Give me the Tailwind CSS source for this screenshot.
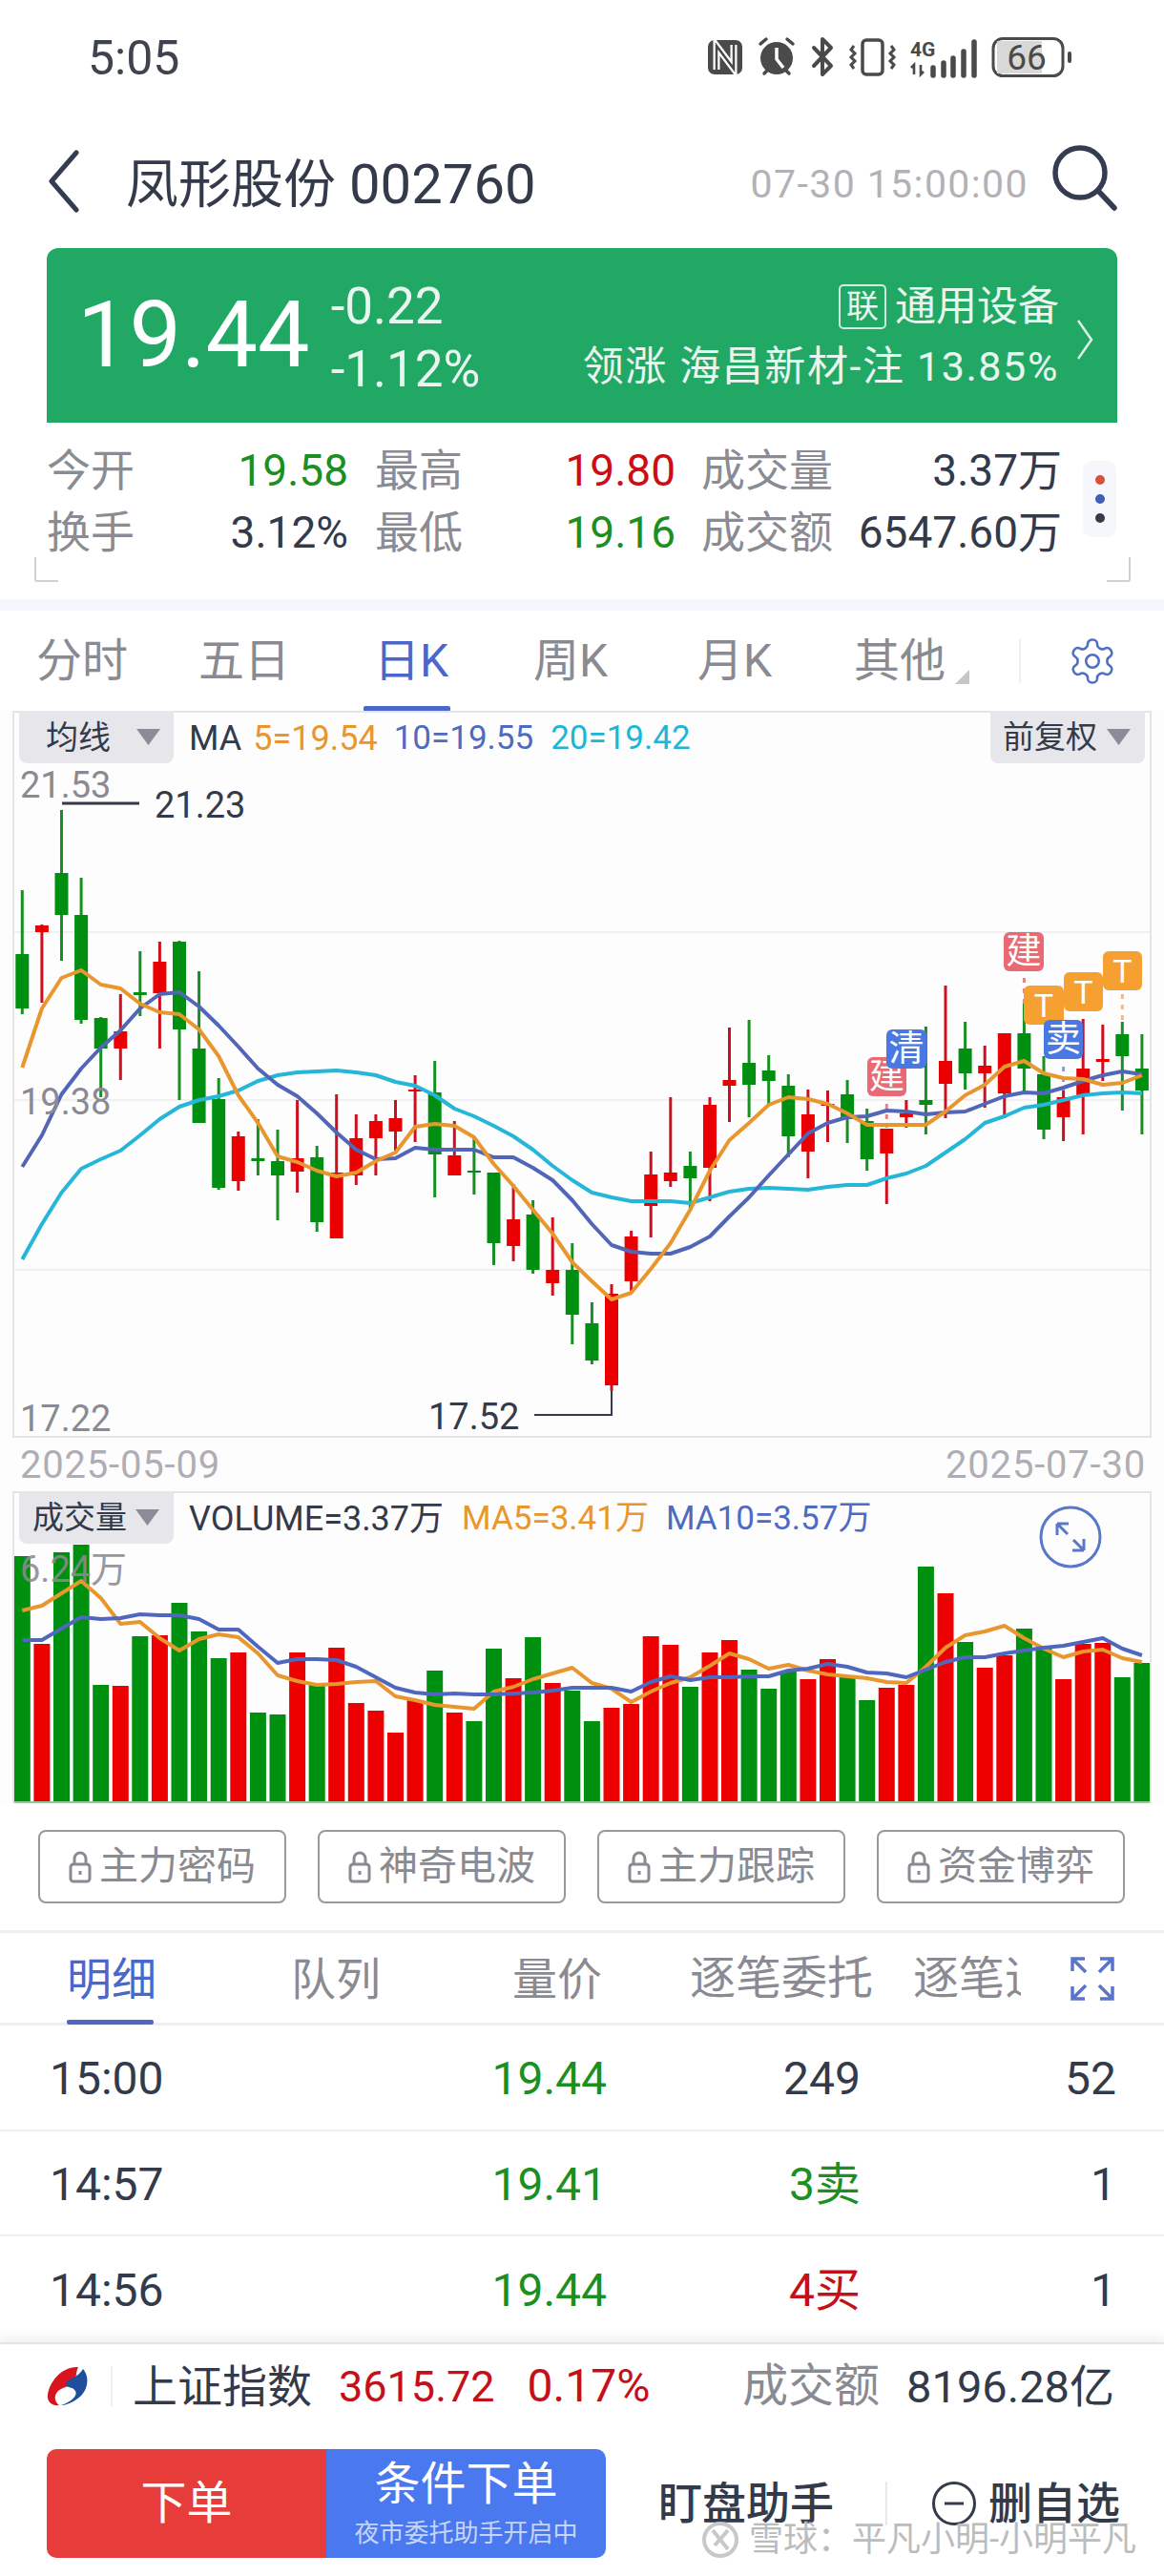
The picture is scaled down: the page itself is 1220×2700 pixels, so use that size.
<!DOCTYPE html>
<html lang="zh">
<head>
<meta charset="utf-8">
<script src="https://cdn.jsdelivr.net/npm/@tailwindcss/browser@4"></script>
</head>
<body class="bg-white">
<div class="w-[1220px] h-[2700px] overflow-hidden relative bg-white flex flex-col font-['Roboto','Noto_Sans_CJK_SC',sans-serif] text-[#333a4a]">

  <!-- status bar -->
  <div class="h-[120px] shrink-0 flex items-center justify-between pl-[92px]">
    <span class="text-[50px] leading-none text-[#3f4350] mt-[2px]">5:05</span>
    <svg class="w-[390px] h-[50px] mr-[92px]" viewBox="738 34 390 50">
      <rect x="742" y="41" width="36" height="36" rx="7" fill="#4a4a4a"/>
      <path d="M751 72V47L769 71V46" fill="none" stroke="#fff" stroke-width="7"/>
      <path d="M751 72V47L769 71V46" fill="none" stroke="#4a4a4a" stroke-width="2.500"/>
      <circle cx="814" cy="60" r="17" fill="#4a4a4a"/>
      <path d="M814 49V61L821 70" fill="none" stroke="#fff" stroke-width="3.500"/>
      <path d="M797 45L803 40M831 45L825 40M801 76L804 73M827 76L824 73" stroke="#4a4a4a" stroke-width="3.500" stroke-linecap="round"/>
      <path d="M853 49L871 68L862 77V40L871 49L853 68" fill="none" stroke="#4a4a4a" stroke-width="4" stroke-linecap="round" stroke-linejoin="round"/>
      <rect x="904" y="41" width="21" height="36" rx="4" fill="none" stroke="#4a4a4a" stroke-width="3.500"/>
      <path d="M895 47L892 51L896 55L892 59L896 63L892 67L895 71M934 47L937 51L933 55L937 59L933 63L937 67L934 71" fill="none" stroke="#4a4a4a" stroke-width="3"/>
      <text x="954" y="58" font-size="21" font-weight="700" fill="#4a4a4a" font-family="Roboto">4G</text>
      <path d="M958 77V67L955 70M965 67V77L968 74" fill="none" stroke="#4a4a4a" stroke-width="2.600"/>
      <path d="M978 78V70M989 78V65M999 78V60M1010 78V53M1021 78V43" stroke="#4a4a4a" stroke-width="5.500" stroke-linecap="round"/>
      <rect x="1041" y="39.500" width="73" height="39" rx="10" fill="none" stroke="#4a4a4a" stroke-width="3"/>
      <path d="M1045 42H1092V76H1045Z" fill="#d8d8d8"/>
      <rect x="1119" y="53" width="4" height="12" rx="2" fill="#4a4a4a"/>
      <text x="1076" y="72" text-anchor="middle" font-size="37" font-weight="400" fill="#4a4a4a" font-family="Roboto">66</text>
    </svg>
  </div>

  <!-- header -->
  <div class="h-[140px] shrink-0 flex items-center pl-[50px] pr-[48px]">
    <svg class="w-[34px] h-[66px]" viewBox="0 0 34 66"><path d="M30 3L4 33L30 63" fill="none" stroke="#333c50" stroke-width="5" stroke-linecap="round" stroke-linejoin="round"/></svg>
    <span class="ml-[48px] text-[55px] leading-none text-[#333a4a] mt-[6px]">凤形股份</span>
    <span class="ml-[14px] text-[58px] leading-none text-[#333a4a] mt-[6px]">002760</span>
    <span class="ml-auto mr-[24px] text-[41px] tracking-[1.4px] leading-none text-[#b2b2b6] mt-[6px]">07-30 15:00:00</span>
    <svg class="w-[70px] h-[70px] -mt-[8px]" viewBox="0 0 70 70"><circle cx="30" cy="30" r="26" fill="none" stroke="#333c50" stroke-width="5.500"/><path d="M50 50L66 67" stroke="#333c50" stroke-width="5.500" stroke-linecap="round"/></svg>
  </div>

  <!-- quote card -->
  <div class="mx-[49px] h-[183px] shrink-0 rounded-t-[12px] bg-[#22a865] text-white flex items-center pl-[32px] relative">
    <span class="text-[97px] leading-none font-normal">19.44</span>
    <div class="ml-[22px] flex flex-col gap-[14px] text-[53px] leading-[52px] text-white/90 mt-[4px]">
      <span>-0.22</span>
      <span>-1.12%</span>
    </div>
    <div class="ml-auto mr-[61px] flex flex-col items-end gap-[18px] text-white/90">
      <div class="flex items-center">
        <span class="w-[50px] h-[47px] border-2 border-white/80 rounded-[5px] flex items-center justify-center text-[34px] leading-none">联</span>
        <span class="ml-[9px] text-[43px] leading-none">通用设备</span>
      </div>
      <div class="text-[43px] tracking-[1.6px] leading-none whitespace-nowrap">领涨 海昌新材-注 13.85%</div>
    </div>
    <svg class="absolute left-[1079px] top-[74px] w-[18px] h-[44px]" viewBox="0 0 18 44"><path d="M2 2L16 22L2 42" fill="none" stroke="#fff" stroke-opacity=".85" stroke-width="2.500"/></svg>
  </div>

  <!-- stats -->
  <div class="h-[185px] shrink-0 relative pt-[24px]">
    <div class="ml-[49px] grid grid-cols-[91px_225px_118px_225px_164px_241px] text-[46px] leading-[52px] gap-y-[13px] whitespace-nowrap">
      <span class="text-[#8b8b93]">今开</span><span class="text-right text-[#1c8f22]">19.58</span><span class="pl-[28px] text-[#8b8b93]">最高</span><span class="text-right text-[#cc0d16]">19.80</span><span class="pl-[27px] text-[#8b8b93]">成交量</span><span class="text-right">3.37万</span>
      <span class="text-[#8b8b93]">换手</span><span class="text-right">3.12%</span><span class="pl-[28px] text-[#8b8b93]">最低</span><span class="text-right text-[#1c8f22]">19.16</span><span class="pl-[27px] text-[#8b8b93]">成交额</span><span class="text-right">6547.60万</span>
    </div>
    <div class="absolute left-[1135px] top-[40px] w-[35px] h-[80px] rounded-[10px] bg-[#f5f7fc] flex flex-col items-center justify-center gap-[10px]">
      <span class="w-[10px] h-[10px] rounded-full bg-[#d9503f]"></span>
      <span class="w-[10px] h-[10px] rounded-full bg-[#3e5fb8]"></span>
      <span class="w-[10px] h-[10px] rounded-full bg-[#333a4a]"></span>
    </div>
    <div class="absolute left-[36px] top-[141px] w-[25px] h-[26px] border-l-2 border-b-2 border-[#cfcfd4] rounded-bl-[3px]"></div>
    <div class="absolute left-[1160px] top-[141px] w-[25px] h-[26px] border-r-2 border-b-2 border-[#cfcfd4] rounded-br-[3px]"></div>
  </div>
  <div class="h-[12px] shrink-0 bg-[#f5f6fb]"></div>

  <!-- period tabs -->
  <div class="h-[105px] shrink-0 flex items-center pl-[38px] text-[48px] leading-none text-[#8a8a92] relative">
    <span class="w-[170px]">分时</span>
    <span class="w-[184px]">五日</span>
    <span class="w-[167px] text-[#4a67c9] relative">日K<span class="absolute -left-[11px] top-[71px] w-[91px] h-[6px] rounded-[2px] bg-[#4a67c9]"></span></span>
    <span class="w-[172px]">周K</span>
    <span class="w-[164px]">月K</span>
    <span class="relative">其他<svg class="absolute left-[106px] top-[33px] w-[15px] h-[15px]" viewBox="0 0 15 15"><path d="M15 0V15H0Z" fill="#c6c6ca"/></svg></span>
    <span class="absolute left-[1068px] top-[30px] w-[2px] h-[46px] bg-[#f0f0f3]"></span>
    <svg class="absolute left-[1118px] top-[26px] w-[54px] h-[54px]" viewBox="0 0 24 24" fill="none" stroke="#4f6fc4" stroke-width="1.150" stroke-linejoin="round"><path d="M12.22 2h-.44a2 2 0 0 0-2 2v.18a2 2 0 0 1-1 1.730l-.43.25a2 2 0 0 1-2 0l-.15-.08a2 2 0 0 0-2.730.73l-.22.38a2 2 0 0 0 .73 2.730l.15.1a2 2 0 0 1 1 1.720v.51a2 2 0 0 1-1 1.740l-.15.09a2 2 0 0 0-.73 2.730l.22.38a2 2 0 0 0 2.730.73l.15-.08a2 2 0 0 1 2 0l.43.25a2 2 0 0 1 1 1.730V20a2 2 0 0 0 2 2h.44a2 2 0 0 0 2-2v-.18a2 2 0 0 1 1-1.730l.43-.25a2 2 0 0 1 2 0l.15.08a2 2 0 0 0 2.730-.73l.22-.39a2 2 0 0 0-.73-2.730l-.15-.08a2 2 0 0 1-1-1.740v-.5a2 2 0 0 1 1-1.740l.15-.09a2 2 0 0 0 .73-2.730l-.22-.38a2 2 0 0 0-2.730-.73l-.15.08a2 2 0 0 1-2 0l-.43-.25a2 2 0 0 1-1-1.730V4a2 2 0 0 0-2-2z"/><circle cx="12" cy="12" r="3"/></svg>
  </div>

  <!-- chart canvas -->
  <div class="h-[1145px] shrink-0 relative bg-[#fefdfe]">
    <svg class="absolute left-0 top-0 w-[1220px] h-[1145px]" viewBox="0 745 1220 1145" fill="none">
      <path d="M15 977H1205M15 1153H1205M15 1331H1205" stroke="#f0eff2" stroke-width="2"/>
      <path stroke="#188f22" stroke-width="3" d="M23.3 933V1063M64.5 849V1007M85.1 920V1073M105.7 1066V1150M146.8 997V1065M188 986V1153M208.6 1018V1177M229.2 1130V1247M270.4 1173V1232M291 1184V1279M332.2 1201V1291M455.7 1112V1255M496.9 1193V1252M517.5 1229V1326M558.6 1258V1335M599.8 1303V1409M620.4 1365V1430M723.4 1207V1268M785.1 1069V1171M805.7 1106V1158M826.3 1126V1213M888.1 1132V1198M908.7 1162V1227M970.4 1076V1189M1011.6 1071V1142M1073.4 1052V1144M1094 1107V1194M1176.3 1071V1164M1196.9 1084V1189"/>
      <path stroke="#cc1020" stroke-width="3" d="M43.9 969V1051M126.3 1042V1132M167.4 987V1099M249.8 1186V1248M311.6 1153V1250M352.7 1147V1298M373.3 1168V1242M393.9 1168V1232M414.5 1153V1206M435.1 1127V1197M476.3 1175V1232M538.1 1241V1322M579.2 1276V1358M641 1346V1458M661.6 1290V1353M682.2 1207V1297M702.8 1150V1244M744 1150V1259M764.5 1077V1176M846.9 1142V1235M867.5 1143V1197M929.3 1183V1262M949.9 1153V1182M991 1033V1172M1032.2 1096V1161M1052.8 1083V1172M1114.6 1143V1196M1135.2 1068V1189M1155.8 1074V1133"/>
      <path stroke="#008f10" stroke-width="14" d="M23.3 1000V1057M64.5 915V959M85.1 959V1069M105.7 1067V1099M146.8 1040V1043M188 987V1079M208.6 1099V1177M229.2 1152V1245M270.4 1214V1217M291 1217V1232M332.2 1213V1281M455.7 1145V1210M496.9 1227V1229M517.5 1229V1303M558.6 1273V1331M599.8 1331V1378M620.4 1387V1426M723.4 1222V1235M785.1 1114V1137M805.7 1122V1133M826.3 1138V1191M888.1 1147V1173M908.7 1175V1215M970.4 1153V1158M1011.6 1099V1125M1073.4 1083V1120M1094 1126V1184M1176.3 1084V1107M1196.9 1120V1143"/>
      <path stroke="#ea0000" stroke-width="14" d="M43.9 970V977M126.3 1081V1099M167.4 1008V1041M249.8 1191V1238M311.6 1214V1228M352.7 1229V1298M373.3 1193V1232M393.9 1175V1193M414.5 1172V1186M435.1 1142V1144M476.3 1211V1232M538.1 1278V1306M579.2 1331V1345M641 1356V1452M661.6 1296V1343M682.2 1231V1264M702.8 1229V1238M744 1158V1224M764.5 1132V1138M846.9 1168V1207M867.5 1157V1159M929.3 1183V1209M949.9 1167V1171M991 1112V1136M1032.2 1117V1125M1052.8 1083V1146M1114.6 1150V1171M1135.2 1120V1148M1155.8 1110V1113"/>
      <path stroke-width="3" stroke-dasharray="5 6" stroke="#e88088" d="M929.3 1157V1182M1073.4 1025V1052"/>
      <path stroke-width="3" stroke-dasharray="5 6" stroke="#f3b87a" d="M1176.3 1042V1070"/>
      <path stroke-width="3" stroke-dasharray="5 6" stroke="#7f9fe0" d="M1114.6 1118V1143"/>
      <polyline stroke="#25b6d8" stroke-width="4" stroke-linejoin="round" points="23.3,1320 43.9,1283 64.5,1250 85.1,1225 105.7,1215 126.3,1206 146.8,1190 167.4,1173 188,1160 208.6,1153 229.2,1149 249.8,1143 270.4,1133 291,1127 311.6,1124 332.2,1123 352.7,1122 373.3,1124 393.9,1127 414.5,1134 435.1,1138 455.7,1148 476.3,1162 496.9,1170 517.5,1180 538.1,1191 558.6,1205 579.2,1222 599.8,1237 620.4,1250 641,1255 661.6,1259 682.2,1259 702.8,1259 723.4,1261 744,1255 764.5,1249 785.1,1246 805.7,1245 826.3,1246 846.9,1247 867.5,1244 888.1,1242 908.7,1242 929.3,1235 949.9,1230 970.4,1222 991,1208 1011.6,1194 1032.2,1177 1052.8,1170 1073.4,1161 1094,1158 1114.6,1153 1135.2,1148 1155.8,1146 1176.3,1145 1196.9,1146"/>
      <polyline stroke="#5266b8" stroke-width="4" stroke-linejoin="round" points="23.3,1223 43.9,1190 64.5,1147 85.1,1120 105.7,1098 126.3,1080 146.8,1057 167.4,1042 188,1040 208.6,1055 229.2,1075 249.8,1097 270.4,1120 291,1137 311.6,1149 332.2,1167 352.7,1187 373.3,1205 393.9,1215 414.5,1214 435.1,1203 455.7,1205 476.3,1205 496.9,1205 517.5,1213 538.1,1213 558.6,1224 579.2,1237 599.8,1258 620.4,1283 641,1305 661.6,1312 682.2,1314 702.8,1314 723.4,1307 744,1296 764.5,1275 785.1,1255 805.7,1232 826.3,1210 846.9,1188 867.5,1177 888.1,1171 908.7,1170 929.3,1164 949.9,1165 970.4,1168 991,1166 1011.6,1165 1032.2,1157 1052.8,1149 1073.4,1145 1094,1146 1114.6,1140 1135.2,1133 1155.8,1127 1176.3,1123 1196.9,1126"/>
      <polyline stroke="#e8962e" stroke-width="4" stroke-linejoin="round" points="23.3,1119 43.9,1057 64.5,1025 85.1,1017 105.7,1032 126.3,1036 146.8,1052 167.4,1061 188,1063 208.6,1079 229.2,1107 249.8,1148 270.4,1177 291,1212 311.6,1218 332.2,1227 352.7,1233 373.3,1229 393.9,1217 414.5,1208 435.1,1181 455.7,1178 476.3,1180 496.9,1192 517.5,1220 538.1,1243 558.6,1268 579.2,1293 599.8,1323 620.4,1343 641,1362 661.6,1355 682.2,1330 702.8,1303 723.4,1268 744,1227 764.5,1195 785.1,1177 805.7,1158 826.3,1150 846.9,1152 867.5,1157 888.1,1167 908.7,1179 929.3,1179 949.9,1179 970.4,1179 991,1165 1011.6,1148 1032.2,1137 1052.8,1118 1073.4,1112 1094,1125 1114.6,1130 1135.2,1131 1155.8,1137 1176.3,1135 1196.9,1127"/>
      <path d="M65 842H146" stroke="#333a4a" stroke-width="3"/>
      <path d="M560 1483H641V1458" stroke="#333a4a" stroke-width="2"/>
      <path stroke="#009010" stroke-width="17" d="M23.3 1631V1890M64.5 1627V1890M85.1 1619V1890M105.7 1766V1890M146.8 1715V1890M188 1680V1890M208.6 1710V1890M229.2 1738V1890M270.4 1795V1890M291 1797V1890M332.2 1765V1890M455.7 1751V1890M496.9 1804V1890M517.5 1728V1890M558.6 1716V1890M599.8 1772V1890M620.4 1804V1890M723.4 1768V1890M785.1 1750V1890M805.7 1770V1890M826.3 1752V1890M888.1 1758V1890M908.7 1782V1890M970.4 1642V1890M1011.6 1721V1890M1073.4 1707V1890M1094 1728V1890M1176.3 1758V1890M1196.9 1743V1890"/>
      <path stroke="#ec0000" stroke-width="17" d="M43.9 1723V1890M126.3 1767V1890M167.4 1714V1890M249.8 1732V1890M311.6 1732V1890M352.7 1727V1890M373.3 1785V1890M393.9 1793V1890M414.5 1816V1890M435.1 1782V1890M476.3 1795V1890M538.1 1759V1890M579.2 1764V1890M641 1790V1890M661.6 1786V1890M682.2 1715V1890M702.8 1724V1890M744 1732V1890M764.5 1719V1890M846.9 1760V1890M867.5 1739V1890M929.3 1769V1890M949.9 1766V1890M991 1670V1890M1032.2 1748V1890M1052.8 1735V1890M1114.6 1760V1890M1135.2 1723V1890M1155.8 1722V1890"/>
      <polyline stroke="#e8962e" stroke-width="4" stroke-linejoin="round" points="23.3,1688 43.9,1683 64.5,1670 85.1,1657 105.7,1675 126.3,1702 146.8,1700 167.4,1717 188,1730 208.6,1718 229.2,1713 249.8,1716 270.4,1733 291,1756 311.6,1762 332.2,1766 352.7,1765 373.3,1763 393.9,1762 414.5,1778 435.1,1782 455.7,1787 476.3,1789 496.9,1791 517.5,1773 538.1,1768 558.6,1760 579.2,1754 599.8,1748 620.4,1764 641,1770 661.6,1784 682.2,1773 702.8,1764 723.4,1758 744,1746 764.5,1733 785.1,1739 805.7,1749 826.3,1745 846.9,1751 867.5,1755 888.1,1757 908.7,1759 929.3,1763 949.9,1764 970.4,1747 991,1727 1011.6,1714 1032.2,1710 1052.8,1704 1073.4,1717 1094,1728 1114.6,1737 1135.2,1731 1155.8,1729 1176.3,1738 1196.9,1742"/>
      <polyline stroke="#4f68bd" stroke-width="4" stroke-linejoin="round" points="23.3,1719 43.9,1719 64.5,1707 85.1,1695 105.7,1697 126.3,1696 146.8,1692 167.4,1693 188,1693 208.6,1697 229.2,1708 249.8,1708 270.4,1726 291,1743 311.6,1739 332.2,1739 352.7,1740 373.3,1747 393.9,1758 414.5,1769 435.1,1774 455.7,1776 476.3,1775 496.9,1776 517.5,1776 538.1,1775 558.6,1774 579.2,1772 599.8,1769 620.4,1769 641,1769 661.6,1773 682.2,1763 702.8,1757 723.4,1761 744,1758 764.5,1758 785.1,1757 805.7,1757 826.3,1751 846.9,1749 867.5,1744 888.1,1747 908.7,1753 929.3,1754 949.9,1758 970.4,1750 991,1742 1011.6,1737 1032.2,1737 1052.8,1733 1073.4,1730 1094,1727 1114.6,1725 1135.2,1721 1155.8,1717 1176.3,1728 1196.9,1735"/>
      <path d="M15 1889H1205" stroke="#8fcf94" stroke-width="2"/>
      <circle cx="1122" cy="1611" r="31" stroke="#5a78c8" stroke-width="3"/>
      <path d="M1108 1597V1609M1108 1597H1120M1108 1597L1119 1608M1136 1625V1613M1136 1625H1124M1136 1625L1125 1614" stroke="#5a78c8" stroke-width="3"/>
    </svg>

    <!-- main chart panel -->
    <div class="absolute left-0 top-0 w-full h-full flex flex-col pl-[13px]">
      <div class="w-[1194px] h-[762px] shrink-0 border-2 border-[#e4e4e9]">
        <div class="flex items-center h-[53px] text-[35px] leading-none">
          <div class="ml-[5px] -mt-[2px] w-[162px] h-[55px] rounded-b-[8px] bg-[#e7e7eb] flex items-center pl-[28px]">
            <span class="text-[34px] w-[95px]">均线</span>
            <svg class="w-[25px] h-[17px]" viewBox="0 0 25 17"><path d="M0 0H25L12.500 17Z" fill="#8c8c98"/></svg>
          </div>
          <span class="ml-[16px] text-[36px]">MA</span>
          <span class="ml-[12px] text-[#e8962e] text-[36px]">5=19.54</span>
          <span class="ml-[17px] text-[#4f6bbf]">10=19.55</span>
          <span class="ml-[18px] text-[#1fb5d6]">20=19.42</span>
          <div class="ml-auto mr-[5px] -mt-[2px] w-[162px] h-[55px] rounded-b-[8px] bg-[#e7e7eb] flex items-center pl-[13px]">
            <span class="text-[33px] w-[109px] whitespace-nowrap">前复权</span>
            <svg class="w-[25px] h-[17px]" viewBox="0 0 25 17"><path d="M0 0H25L12.500 17Z" fill="#8c8c98"/></svg>
          </div>
        </div>
      </div>
      <div class="w-[1194px] h-[56px] shrink-0 flex items-center justify-between pl-[8px] pr-[6px] text-[40px] tracking-[0.8px] leading-none text-[#aeaeb4] pt-[2px]">
        <span>2025-05-09</span><span>2025-07-30</span>
      </div>
      <div class="w-[1194px] h-[327px] shrink-0 border-x-2 border-t-2 border-[#e4e4e9]">
        <div class="flex items-center h-[53px] text-[36px] leading-none">
          <div class="ml-[5px] -mt-[2px] w-[162px] h-[55px] rounded-b-[8px] bg-[#e7e7eb] flex items-center pl-[14px]">
            <span class="text-[33px] w-[108px] whitespace-nowrap">成交量</span>
            <svg class="w-[25px] h-[17px]" viewBox="0 0 25 17"><path d="M0 0H25L12.500 17Z" fill="#8c8c98"/></svg>
          </div>
          <span class="ml-[16px]">VOLUME=3.37万</span>
          <span class="ml-[19px] text-[#e8962e] text-[35px]">MA5=3.41万</span>
          <span class="ml-[18px] text-[#4f6bbf] text-[35px]">MA10=3.57万</span>
        </div>
      </div>
    </div>

    <!-- labels over the plot -->
    <span class="absolute left-[21px] top-[59px] text-[38px] leading-none text-[#8a8a92]">21.53</span>
    <span class="absolute left-[162px] top-[80px] text-[38px] leading-none text-[#333a4a]">21.23</span>
    <span class="absolute left-[21px] top-[391px] text-[38px] leading-none text-[#8a8a92]">19.38</span>
    <span class="absolute left-[21px] top-[723px] text-[38px] leading-none text-[#8a8a92]">17.22</span>
    <span class="absolute left-[449px] top-[721px] text-[38px] leading-none text-[#333a4a]">17.52</span>
    <span class="absolute left-[21px] top-[881px] text-[38px] leading-none text-[#8a8a92]/90">6.24万</span>

    <!-- trade markers -->
    <span class="absolute left-[909px] top-[363px] w-[41px] h-[41px] rounded-[6px] bg-[#e96a73] text-white text-[37px] leading-none flex items-center justify-center">建</span>
    <span class="absolute left-[929px] top-[334px] w-[42px] h-[41px] rounded-[6px] bg-[#4a78e2] text-white text-[37px] leading-none flex items-center justify-center">清</span>
    <span class="absolute left-[1052px] top-[232px] w-[42px] h-[41px] rounded-[6px] bg-[#e96a73] text-white text-[37px] leading-none flex items-center justify-center">建</span>
    <span class="absolute left-[1073px] top-[288px] w-[42px] h-[41px] rounded-[6px] bg-[#f5a030] text-white text-[34px] leading-none flex items-center justify-center">T</span>
    <span class="absolute left-[1115px] top-[274px] w-[41px] h-[41px] rounded-[6px] bg-[#f5a030] text-white text-[34px] leading-none flex items-center justify-center">T</span>
    <span class="absolute left-[1156px] top-[252px] w-[41px] h-[41px] rounded-[6px] bg-[#f5a030] text-white text-[34px] leading-none flex items-center justify-center">T</span>
    <span class="absolute left-[1094px] top-[324px] w-[41px] h-[41px] rounded-[6px] bg-[#4a78e2] text-white text-[37px] leading-none flex items-center justify-center">卖</span>
  </div>

  <!-- locked tools -->
  <div class="h-[133px] shrink-0 flex items-center pl-[40px] gap-[33px]">
    <div class="w-[260px] h-[77px] border-2 border-[#98989e] rounded-[8px] flex items-center justify-center gap-[8px] text-[41px] leading-none text-[#8a8a92]">
      <svg class="w-[24px] h-[34px]" viewBox="0 0 24 34" fill="none" stroke="#8a8a92" stroke-width="3"><rect x="2" y="14" width="20" height="18" rx="3"/><path d="M6 14V8a6 6 0 0 1 12 0v6M12 21v4"/></svg>主力密码
    </div>
    <div class="w-[260px] h-[77px] border-2 border-[#98989e] rounded-[8px] flex items-center justify-center gap-[8px] text-[41px] leading-none text-[#8a8a92]">
      <svg class="w-[24px] h-[34px]" viewBox="0 0 24 34" fill="none" stroke="#8a8a92" stroke-width="3"><rect x="2" y="14" width="20" height="18" rx="3"/><path d="M6 14V8a6 6 0 0 1 12 0v6M12 21v4"/></svg>神奇电波
    </div>
    <div class="w-[260px] h-[77px] border-2 border-[#98989e] rounded-[8px] flex items-center justify-center gap-[8px] text-[41px] leading-none text-[#8a8a92]">
      <svg class="w-[24px] h-[34px]" viewBox="0 0 24 34" fill="none" stroke="#8a8a92" stroke-width="3"><rect x="2" y="14" width="20" height="18" rx="3"/><path d="M6 14V8a6 6 0 0 1 12 0v6M12 21v4"/></svg>主力跟踪
    </div>
    <div class="w-[260px] h-[77px] border-2 border-[#98989e] rounded-[8px] flex items-center justify-center gap-[8px] text-[41px] leading-none text-[#8a8a92]">
      <svg class="w-[24px] h-[34px]" viewBox="0 0 24 34" fill="none" stroke="#8a8a92" stroke-width="3"><rect x="2" y="14" width="20" height="18" rx="3"/><path d="M6 14V8a6 6 0 0 1 12 0v6M12 21v4"/></svg>资金博弈
    </div>
  </div>

  <!-- detail tabs -->
  <div class="h-[100px] shrink-0 border-t-[3px] border-b-[3px] border-[#eeeff2] flex items-center pl-[70px] text-[47px] leading-none text-[#8a8a92] relative pt-[2px]">
    <span class="w-[235px] text-[#4a67c9] relative">明细<span class="absolute left-0 top-[66px] w-[91px] h-[5px] rounded-[2px] bg-[#5166c4]"></span></span>
    <span class="w-[232px]">队列</span>
    <span class="w-[186px]">量价</span>
    <span class="w-[234px] whitespace-nowrap text-[48px]">逐笔委托</span>
    <span class="w-[113px] overflow-hidden whitespace-nowrap text-[48px]">逐笔追踪</span>
    <svg class="ml-[52px] w-[46px] h-[46px]" viewBox="0 0 46 46" fill="none" stroke="#5a74cc" stroke-width="3.500"><path d="M2 15V2H15M2 2L16 16M44 15V2H31M44 2L30 16M2 31V44H15M2 44L16 30M44 31V44H31M44 44L30 30"/></svg>
  </div>

  <!-- trades -->
  <div class="h-[111px] shrink-0 border-b-2 border-[#eeeff2] grid grid-cols-[300px_284px_266px_268px] items-center pl-[52px] pt-[3px] text-[48px] leading-none">
    <span>15:00</span><span class="text-right text-[#1c8f22]">19.44</span><span class="text-right">249</span><span class="text-right">52</span>
  </div>
  <div class="h-[110px] shrink-0 border-b-2 border-[#eeeff2] grid grid-cols-[300px_284px_266px_268px] items-center pl-[52px] pt-[3px] text-[48px] leading-none">
    <span>14:57</span><span class="text-right text-[#1c8f22]">19.41</span><span class="text-right text-[#1c8f22]">3卖</span><span class="text-right">1</span>
  </div>
  <div class="h-[111px] shrink-0 grid grid-cols-[300px_284px_266px_268px] items-center pl-[52px] pt-[3px] text-[48px] leading-none">
    <span>14:56</span><span class="text-right text-[#1c8f22]">19.44</span><span class="text-right text-[#c5101a]">4买</span><span class="text-right">1</span>
  </div>

  <!-- footer -->
  <div class="flex-1 relative bg-white border-t-2 border-[#e4e4e6] shadow-[0_-6px_10px_rgba(0,0,0,0.06)] flex flex-col">
    <div class="h-[88px] shrink-0 flex items-center pl-[49px] pr-[52px] text-[45px] leading-none">
      <svg class="w-[46px] h-[42px]" viewBox="0 0 46 42">
        <path d="M33 1C16 0 3 16 1 30C0 37 5 42 13 41C8 37 7 31 12 26C17 21 28 22 30 14C31 9 31 5 33 1Z" fill="#d8141f"/>
        <path d="M38 3C46 12 43 28 31 35C25 39 19 41 15 41C25 38 33 31 30 26C27 21 20 23 20 19C21 13 32 13 38 3Z" fill="#1f4f9c"/>
      </svg>
      <span class="ml-[21px] w-[2px] h-[42px] bg-[#f0f0f2]"></span>
      <span class="ml-[21px] text-[47px]">上证指数</span>
      <span class="ml-[28px] text-[#c5101a]">3615.72</span>
      <span class="ml-[34px] text-[#c5101a] text-[48px]">0.17%</span>
      <span class="ml-auto text-[#8a8a92] text-[48px]">成交额</span>
      <span class="ml-[28px] text-[47px]">8196.28亿</span>
    </div>
    <div class="h-[114px] mt-[22px] shrink-0 flex pl-[49px]">
      <div class="w-[293px] h-full rounded-l-[10px] bg-[#e63c3a] text-white text-[48px] leading-none flex items-center justify-center">下单</div>
      <div class="w-[293px] h-full rounded-r-[10px] bg-[#4a78ee] text-white flex flex-col items-center justify-center gap-[14px]">
        <span class="text-[48px] leading-none">条件下单</span>
        <span class="text-[26px] leading-none text-white/70">夜市委托助手开启中</span>
      </div>
      <div class="flex-1 flex items-center pl-[55px] text-[46px] leading-none">
        <span class="font-medium">盯盘助手</span>
        <span class="ml-[54px] w-[2px] h-[46px] bg-[#e8e8ec]"></span>
        <svg class="ml-[47px] w-[46px] h-[46px]" viewBox="0 0 46 46" fill="none" stroke="#333a4a" stroke-width="3"><circle cx="23" cy="23" r="21.500"/><path d="M13 23H33"/></svg>
        <span class="ml-[13px] font-medium">删自选</span>
      </div>
    </div>
    <!-- watermark -->
    <div class="absolute left-[735px] top-[185px] flex items-center text-[36px] leading-none text-[#bcbcbc] [text-shadow:0_0_2px_#ffffff] whitespace-nowrap">
      <svg class="w-[40px] h-[40px] mr-[10px]" viewBox="0 0 40 40" fill="none" stroke="#c8c8c8" stroke-width="4"><circle cx="20" cy="20" r="17"/><path d="M12 10L28 30M28 10L14 26"/></svg>
      <span>雪球：平凡小明-小明平凡</span>
    </div>
  </div>
</div>
</body>
</html>
